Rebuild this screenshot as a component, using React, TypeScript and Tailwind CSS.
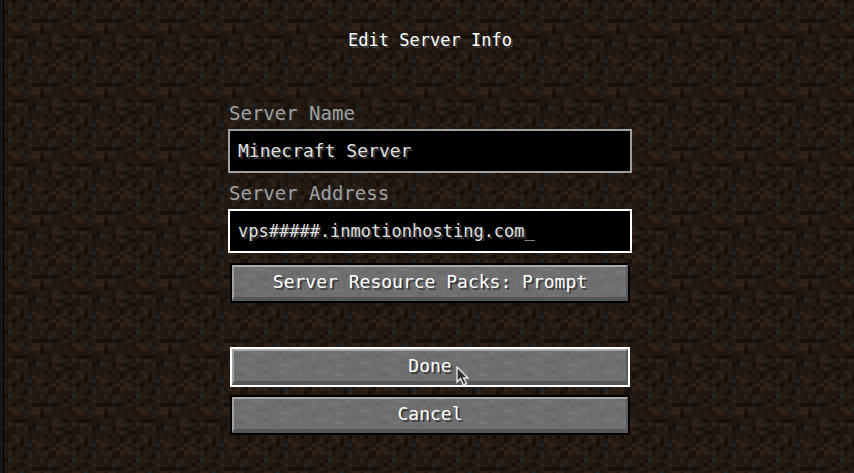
import { useState } from "react";
import type { ButtonHTMLAttributes, InputHTMLAttributes } from "react";
import { clsx } from "clsx";

const DIRT = [
  "mldmmdbdlmldklml",
  "dmmmdklmdmmkdmdd",
  "kbmldmmddldmlmdm",
  "mmddkdlmmddbmmdk",
  "dmkmmdmkkkkdkkml",
  "dllmbdmlldlldmmd",
  "ddlldmlllkmmdmdm",
  "mddddmddmkddmmdm",
  "dmkkkkdddmmdlldk",
  "dlmllmdkmmddllbm",
  "mddmdlkdblmkmddd",
  "kddmmmdmddmdmlmk",
  "ddlldmkmdmkmdkdm",
  "kdmlkmdlmmmdmkml",
  "mlddkmbdlldmdlmd",
  "dmkdmddmmdkmldll",
];

const DIRT_COLORS: Record<string, string> = {
  k: "#160f0a",
  d: "#1e160f",
  m: "#251b12",
  l: "#2e2118",
  b: "#1f2426",
};

const STONE = [
  "..aa.....b..........aaa.........bbb......a......",
  ".......aaaa....bb..........a..........aa.....b..",
  "bb..........a.......bbb.........aaaa.......bb...",
  "....aaa..........b........aa..........b.........",
  ".........bbb.........aa.........b..........aaa..",
  "a.....b.........aaaa......bb.......aa...........",
  "...aa......a...........b........a........bbb..a.",
  "..........bb....aa..........aaa......b..........",
  ".bbb..aa..............a...........aaa......aa...",
  "..............bb...........b..............b.....",
  "....a....aaa........b....aa....bb....a..........",
  "aa...........b..aa...............aa.......aa...b",
];

const STONE_COLORS: Record<string, string> = {
  ".": "#6f6f6f",
  a: "#767676",
  b: "#686868",
};

function Texture({ id, rows, colors, cell, offset }: {
  id: string;
  rows: string[];
  colors: Record<string, string>;
  cell: number;
  offset: number;
}) {
  return (
    <svg aria-hidden="true" className="absolute inset-0 h-full w-full" shapeRendering="crispEdges">
      <defs>
        <pattern id={id} y={offset} width={rows[0].length * cell} height={rows.length * cell} patternUnits="userSpaceOnUse">
          {rows.map((row, y) =>
            [...row].map((c, x) => (
              <rect key={`${x}-${y}`} x={x * cell} y={y * cell} width={cell} height={cell} fill={colors[c]} />
            ))
          )}
        </pattern>
      </defs>
      <rect width="100%" height="100%" fill={`url(#${id})`} />
    </svg>
  );
}

function Pointer() {
  return (
    <svg aria-hidden="true" viewBox="0 0 13 20" className="pointer-events-none absolute top-[19px] left-[226px] h-5 w-[13px]">
      <path
        d="M1 1v15l3.5-3.5 3 6.5 3-1.5-3-5.500h4.500z"
        fill="#303030"
        stroke="#e4e4e4"
        strokeWidth="1.4"
      />
    </svg>
  );
}

type FieldProps = InputHTMLAttributes<HTMLInputElement> & { id: string; label: string };

function Field({ id, label, className, ...props }: FieldProps) {
  return (
    <div>
      <label htmlFor={id} className="ml-px block text-[19px] leading-6 text-[#a0a0a0] [text-shadow:2px_2px_0_#282828]">
        {label}
      </label>
      <input
        id={id}
        spellCheck={false}
        className={clsx(
          "mt-1 block h-11 w-full border-2 bg-black px-2 pb-px text-[#e0e0e0] outline-none [text-shadow:2px_2px_0_#383838]",
          className
        )}
        {...props}
      />
    </div>
  );
}

type MenuButtonProps = ButtonHTMLAttributes<HTMLButtonElement> & { id: string; active?: boolean };

function MenuButton({ id, active, children, ...props }: MenuButtonProps) {
  return (
    <button
      id={id}
      type="button"
      className={clsx("relative block h-10 w-full border-2 text-[18px] leading-6", active ? "border-white" : "border-black")}
      {...props}
    >
      <Texture id={`${id}-stone`} rows={STONE} colors={STONE_COLORS} cell={3} offset={0} />
      <span className="relative flex h-full items-center justify-center border-t-2 border-r-2 border-b-4 border-l-2 border-t-[#aaaaaa] border-r-[#5a5a5a] border-b-[#565656] border-l-[#a0a0a0] text-white [text-shadow:2px_2px_0_#3c3c3c]">
        {children}
      </span>
    </button>
  );
}

export default function App() {
  const [name, setName] = useState("Minecraft Server");
  const [address, setAddress] = useState("vps#####.inmotionhosting.com_");
  const [prompt, setPrompt] = useState(true);

  return (
    <div className="flex min-h-screen bg-[#17181a] font-['DejaVu_Sans_Mono',monospace]">
      <div className="w-[3px] shrink-0" />
      <main className="relative min-w-0 flex-1 border-l border-black bg-[#1d140e] pl-0.5">
        <Texture id="dirt" rows={DIRT} colors={DIRT_COLORS} cell={4} offset={3} />
        <form className="relative mx-auto w-full max-w-[404px] pt-7">
          <h1 className="text-center text-[17px] leading-6 text-white [text-shadow:2px_2px_0_#3e3e3e]">Edit Server Info</h1>

          <div className="mt-[49px] space-y-2">
            <Field
              id="server-name"
              label="Server Name"
              value={name}
              onChange={(e) => setName(e.target.value)}
              className="border-[#a0a0a0] text-[18px]"
            />
            <Field
              id="server-address"
              label="Server Address"
              value={address}
              onChange={(e) => setAddress(e.target.value)}
              className="border-white text-[17px]"
            />
          </div>

          <div className="mt-[10px] px-0.5">
            <MenuButton id="packs" onClick={() => setPrompt(!prompt)}>
              Server Resource Packs: {prompt ? "Prompt" : "Disabled"}
            </MenuButton>
            <div className="mt-11 space-y-2">
              <div className="relative">
                <MenuButton id="done" active>Done</MenuButton>
                <Pointer />
              </div>
              <MenuButton id="cancel">Cancel</MenuButton>
            </div>
          </div>
        </form>
      </main>
    </div>
  );
}
